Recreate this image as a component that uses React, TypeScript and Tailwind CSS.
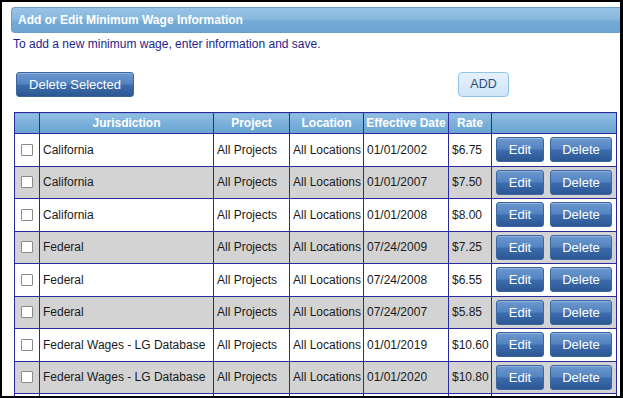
const rows = [
  { j: "California", d: "01/01/2002", r: "$6.75" },
  { j: "California", d: "01/01/2007", r: "$7.50" },
  { j: "California", d: "01/01/2008", r: "$8.00" },
  { j: "Federal", d: "07/24/2009", r: "$7.25" },
  { j: "Federal", d: "07/24/2008", r: "$6.55" },
  { j: "Federal", d: "07/24/2007", r: "$5.85" },
  { j: "Federal Wages - LG Database", d: "01/01/2019", r: "$10.60" },
  { j: "Federal Wages - LG Database", d: "01/01/2020", r: "$10.80" },
]

const blueBtn =
  "h-[25px] rounded-[3px] border border-[#3b66a2] bg-[linear-gradient(to_bottom,#6e98cf_0%,#5283c0_48%,#3d6cad_52%,#2c5793_100%)] text-white text-[13px] shadow-[inset_0_1px_0_rgba(255,255,255,0.25)]"

const cell = "border border-[#2a2a9c] pl-[3px] whitespace-nowrap"

export default function App() {
  return (
    <div className="w-[623px] h-[398px] overflow-hidden bg-white border-black border-t-2 border-l-2 border-b-2 border-r-[3px] font-['Liberation_Sans',Arial,sans-serif]">
      <div className="mt-[5px] ml-[9px] h-[26px] rounded-l-[4px] border-y border-l border-[#6a9fcc] bg-[linear-gradient(to_bottom,#97c3e6_0%,#89b9df_45%,#74abd6_55%,#6ca5d3_100%)] pl-[6px] text-[12px] font-bold leading-[25px] text-white">
        Add or Edit Minimum Wage Information
      </div>
      <p className="mt-[4px] ml-[11px] text-[12px] leading-[14px] text-[#1e1e8a]">
        To add a new minimum wage, enter information and save.
      </p>

      <div className="mt-[21px] ml-[14px] flex">
        <button className={`${blueBtn} w-[118px] text-[12.5px] text-[#eef3fb]`}>Delete Selected</button>
        <button className="ml-[324px] h-[25px] w-[51px] rounded-[4px] border border-[#92c4ea] bg-[linear-gradient(to_bottom,#e6f2fc,#cfe5f7)] text-[12.5px] text-[#2c4b7c]">
          ADD
        </button>
      </div>

      <table className="mt-[15px] ml-[12px] w-[602px] table-fixed border-collapse text-[12px] text-[#1a1a1a]">
        <colgroup>
          <col className="w-[25px]" />
          <col className="w-[174px]" />
          <col className="w-[76px]" />
          <col className="w-[74px]" />
          <col className="w-[85px]" />
          <col className="w-[43px]" />
          <col className="w-[125px]" />
        </colgroup>
        <thead>
          <tr className="h-[21px]">
            {["", "Jurisdiction", "Project", "Location", "Effective Date", "Rate", ""].map((h, i) => (
              <th
                key={i}
                className="border border-[#2a2a9c] bg-[linear-gradient(to_bottom,#92bfe4,#78afda_55%,#6aa3d1)] p-0 text-center font-bold text-white"
              >
                {h}
              </th>
            ))}
          </tr>
        </thead>
        <tbody>
          {rows.map((row, i) => (
            <tr key={i} className={`h-[32.5px] ${i % 2 ? "bg-[#d3d3d3]" : "bg-white"}`}>
              <td className="border border-[#2a2a9c] p-0">
                <div className="mx-auto h-[12px] w-[12px] rounded-[1px] border border-[#8a8a8a] bg-white" />
              </td>
              <td className={cell}>{row.j}</td>
              <td className={cell}>All Projects</td>
              <td className={cell}>All Locations</td>
              <td className={cell}>{row.d}</td>
              <td className={cell}>{row.r}</td>
              <td className="border border-[#2a2a9c] px-[4px]">
                <div className="flex gap-[6px]">
                  <button className={`${blueBtn} w-[48px]`}>Edit</button>
                  <button className={`${blueBtn} w-[62px]`}>Delete</button>
                </div>
              </td>
            </tr>
          ))}
          {/* next row, only its top edge shows */}
          <tr className="h-[32.5px] bg-white">
            {[0, 1, 2, 3, 4, 5, 6].map((k) => (
              <td key={k} className="border border-[#2a2a9c]" />
            ))}
          </tr>
        </tbody>
      </table>
    </div>
  )
}
